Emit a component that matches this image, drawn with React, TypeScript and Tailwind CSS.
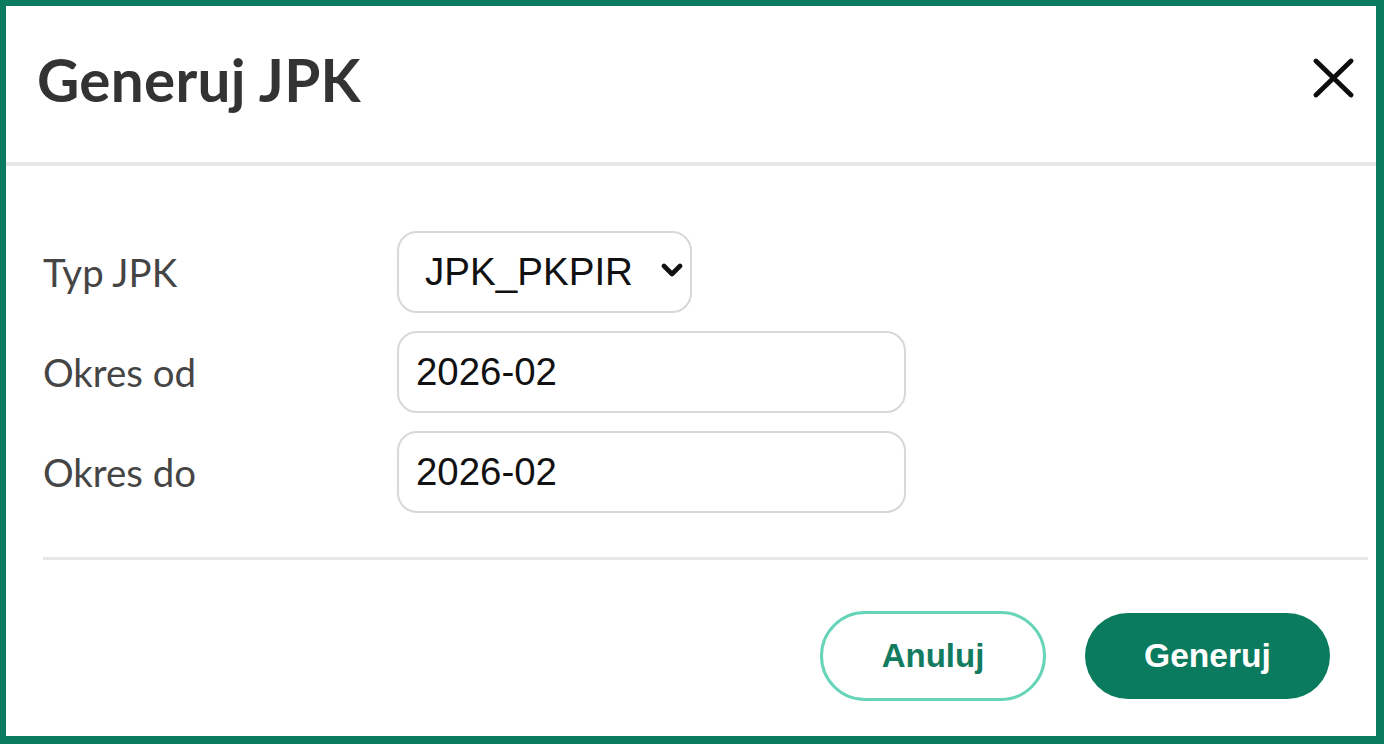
import { useState } from 'react'

const types = ['JPK_PKPIR', 'JPK_V7M', 'JPK_FA', 'JPK_EWP']

export default function App() {
  const [typ, setTyp] = useState('JPK_PKPIR')
  const [od, setOd] = useState('2026-02')
  const [doo, setDoo] = useState('2026-02')

  return (
    <div className="w-[1384px] h-[744px] box-border border-[#0b7b5f] border-t-[6px] border-l-[6px] border-r-[8px] border-b-[8px] bg-white flex flex-col overflow-hidden">
      {/* header */}
      <div className="h-[160px] shrink-0 border-b-4 border-[#e7e7e7] flex items-center justify-between pl-[31px] pr-[22px] pb-[10px]">
        <h1 className="font-['Lato',sans-serif] font-bold text-[58.4px] leading-none text-[#333333] tracking-[0.3px]">
          Generuj JPK
        </h1>
        <button className="mb-[2px] text-[#0d0d0d]" aria-label="Zamknij">
          <svg width="41" height="40" viewBox="0 0 41 40" fill="none">
            <path d="M3 3 L38 37 M38 3 L3 37" stroke="currentColor" strokeWidth="4.8" strokeLinecap="round" />
          </svg>
        </button>
      </div>

      {/* body */}
      <div className="flex flex-col pl-[37px] pr-[8px] pt-[65px]">
        <div className="flex flex-col gap-[18px]">
          <div className="flex items-center h-[82px]">
            <label className="w-[354px] font-['Lato',sans-serif] text-[38.4px] text-[#454545] leading-none">
              Typ JPK
            </label>
            <div className="relative w-[295px] h-[82px]">
              <select
                value={typ}
                onChange={(e) => setTyp(e.target.value)}
                className="appearance-none w-full h-full border-2 border-[#d8d8d8] rounded-[20px] bg-white pl-[26px] pr-[40px] font-['Liberation_Sans',Arial,sans-serif] text-[38.6px] text-[#111111] outline-none"
              >
                {types.map((t) => (
                  <option key={t} value={t}>
                    {t}
                  </option>
                ))}
              </select>
              <svg
                className="absolute right-[9px] top-[32px] pointer-events-none"
                width="22"
                height="15"
                viewBox="0 0 22 15"
                fill="none"
              >
                <path d="M3 3 L11 11 L19 3" stroke="#111111" strokeWidth="4.6" strokeLinecap="round" strokeLinejoin="round" />
              </svg>
            </div>
          </div>

          <div className="flex items-center h-[82px]">
            <label className="w-[354px] font-['Lato',sans-serif] text-[38.4px] text-[#454545] leading-none">
              Okres od
            </label>
            <input
              type="text"
              value={od}
              onChange={(e) => setOd(e.target.value)}
              className="w-[509px] h-[82px] border-2 border-[#d8d8d8] rounded-[20px] bg-white pl-[17px] font-['Liberation_Sans',Arial,sans-serif] text-[38.4px] text-[#111111] outline-none"
            />
          </div>

          <div className="flex items-center h-[82px]">
            <label className="w-[354px] font-['Lato',sans-serif] text-[38.4px] text-[#454545] leading-none">
              Okres do
            </label>
            <input
              type="text"
              value={doo}
              onChange={(e) => setDoo(e.target.value)}
              className="w-[509px] h-[82px] border-2 border-[#d8d8d8] rounded-[20px] bg-white pl-[17px] font-['Liberation_Sans',Arial,sans-serif] text-[38.4px] text-[#111111] outline-none"
            />
          </div>
        </div>

        <div className="mt-[44px] h-[3px] bg-[#e7e7e7]" />

        {/* footer */}
        <div className="flex items-center justify-end gap-[39px] mt-[51px] mr-[38px] h-[90px]">
          <button className="w-[226px] h-[90px] rounded-full border-[3px] border-[#66d4b8] bg-white font-['Liberation_Sans',Arial,sans-serif] font-bold text-[33px] text-[#137b60]">
            Anuluj
          </button>
          <button className="w-[245px] h-[86px] rounded-full bg-[#0b7b5f] font-['Liberation_Sans',Arial,sans-serif] font-bold text-[33.6px] text-white">
            Generuj
          </button>
        </div>
      </div>
    </div>
  )
}
